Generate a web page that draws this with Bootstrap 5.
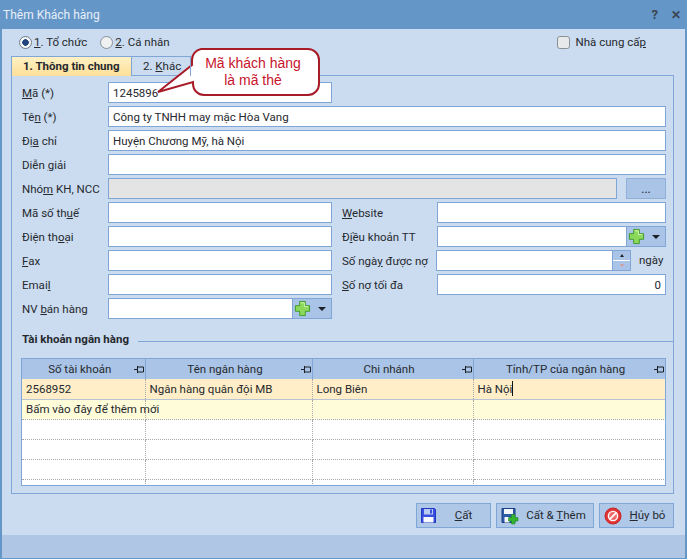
<!DOCTYPE html>
<html lang="vi">
<head>
    <meta charset="UTF-8">
    <meta name="viewport" content="width=device-width, initial-scale=1.0">
    <title>Thêm Khách hàng</title>
    <link href="https://cdn.jsdelivr.net/npm/bootstrap@5.3.0/dist/css/bootstrap.min.css" rel="stylesheet">
    <style>
        html, body { margin: 0; height: 559px; overflow: hidden; }
        body {
            font-family: Roboto, "Liberation Sans", Arial, sans-serif;
            font-size: 11.5px;
            color: #26292e;
            background: #cbdcf0;
        }
        u { text-underline-offset: 1px; }
        .app-win {
            position: relative;
            width: 687px;
            height: 559px;
            border-left: 2px solid #6496c8;
            border-right: 2px solid #6496c8;
            border-bottom: 1px solid #6496c8;
        }
        .title-bar {
            height: 29px;
            margin: 0 -2px;
            padding: 0 6px 0 3px;
            background: #6496c8;
            color: #e8eff8;
            font-size: 12px;
        }
        .title-btn { color: #3c4450; font-weight: 700; font-size: 13px; }
        .title-btn + .title-btn { margin-left: 13px; font-size: 12px; }
        .top-opts { height: 27px; padding: 0 39px 0 17px; }
        .opt-radio { width: 13px; height: 13px; margin: 0 2px 0 0; flex: none; border: 1px solid #8a8f96; background-color: #eef0f2; }
        .opt-radio:checked { background-image: radial-gradient(circle, #24467e 0 3px, #f4f6f8 3.6px); background-color: #f4f6f8; border-color: #6f7a88; }
        .opt-gap { margin-right: 13px; }
        .opt-check { width: 13px; height: 13px; margin: 0 6px 0 0; border: 1px solid #8a8f96; border-radius: 0; background-color: #e6e8ea; }
        .tab-strip { height: 19px; padding-left: 9px; }
        .tab-item { height: 20px; padding-left: 11px; color: #26292e; border: 1px solid #7fa6d6; border-bottom: 0; position: relative; z-index: 1; white-space: nowrap; }
        .tab-on { width: 121px; background: linear-gradient(#fff1c4, #fddf98); font-weight: 700; }
        .tab-off { width: 59px; border-left: 0; }
        .tab-body {
            width: 663px;
            height: 419px;
            margin-left: 9px;
            padding: 6px 7px 0 9px;
            border: 1px solid #7fa6d6;
        }
        .fld-row { height: 21px; margin-bottom: 3px; }
        .fld-label { width: 87px; flex: none; padding: 3px 0 0 1px; white-space: nowrap; }
        .fld-label-r { width: 95px; flex: none; padding-top: 3px; white-space: nowrap; }
        .fld-label-s { width: 94px; }
        .fld-half { width: 224px; flex: none; }
        .fld-side { width: 10px; flex: none; }
        .form-control.fld-input {
            height: 21px;
            min-height: 21px;
            padding: 0 4px;
            font-size: 11.5px;
            color: #26292e;
            border: 1px solid #7fa6d6;
            border-radius: 0;
            box-shadow: none;
        }
        .form-control.fld-input:disabled { background: #e4e4e4; }
        .form-control.fld-spin { width: 177px; flex: none; }
        .fld-addon { width: 39px; height: 21px; background: #a9c4e6; border: 1px solid #7fa6d6; border-left: 0; padding-left: 1px; }
        .caret-down { width: 0; height: 0; margin-left: 7px; border-left: 4px solid transparent; border-right: 4px solid transparent; border-top: 4px solid #1d2026; }
        .dots-btn { width: 40px; height: 21px; margin-left: 9px; padding: 0; font-size: 12px; line-height: 20px; color: #26292e; background: #a9c4e6; border: 1px solid #8fb0d8; border-radius: 0; }
        .spin-box { width: 18px; height: 21px; flex: none; background: #a9c4e6; border: 1px solid #7fa6d6; border-left: 0; }
        .spin-up, .spin-down { height: 50%; }
        .spin-up { border-bottom: 1px solid #fff; }
        .spin-arr-up { border-left: 2px solid transparent; border-right: 2px solid transparent; border-bottom: 3px solid #20242a; }
        .spin-arr-dn { border-left: 2px solid transparent; border-right: 2px solid transparent; border-top: 3px solid #d79a9a; }
        .grp-head { margin-top: 12px; height: 18px; margin-right: -7px; }
        .grp-head b { margin-right: 9px; padding-left: 1px; }
        .grp-line { flex: 1; height: 1px; margin-top: 3px; background: #7fa6d6; }
        .acct-wrap { width: 645px; height: 128px; margin-top: 9px; background: #fff; border: 1px solid #7fa6d6; overflow: hidden; }
        .acct-grid { width: 643px; table-layout: fixed; border-collapse: collapse; }
        .acct-grid th { height: 20px; padding: 1px 0 0 4px; font-weight: 400; background: #a9c4e6; border-right: 1px solid #7fa6d6; }
        .acct-grid td { height: 20px; padding: 1px 4px 0; border-right: 1px dotted #a9a9a9; border-bottom: 1px dotted #a9a9a9; white-space: nowrap; }
        .acct-grid tr.row-cur td { background: #ffeec7; border-bottom: 1px solid #b7c3d2; }
        .acct-grid tr.row-cur td:last-child { border-right-color: #7fa6d6; }
        .acct-grid tr.row-new td { background: #fffcd9; }
        .col-acc { width: 123px; }
        .col-bank { width: 167px; }
        .col-branch { width: 161px; }
        .col-city { width: 192px; }
        .text-cursor { display: inline-block; width: 1px; height: 15px; background: #111; vertical-align: -3px; }
        .foot-btns { height: 25px; margin-top: 9px; padding-right: 11px; gap: 5px; }
        .foot-btn { height: 25px; padding: 0 0 0 4px; font-size: 11.5px; color: #26292e; background: #afc8e8; border: 1px solid #7fa6d6; border-radius: 0; }
        .foot-btn .btn-txt { flex: 1; text-align: center; }
        .foot-btn-s { width: 75px; }
        .foot-btn-l { width: 98px; }
        .foot-band { position: absolute; left: 0; right: 0; bottom: 0; height: 23px; background: #afc7e5; }
        .note-bubble { position: absolute; left: 150px; top: 46px; pointer-events: none; }
        .note-text {
            position: absolute;
            left: 189px;
            top: 55px;
            width: 128px;
            text-align: center;
            font-family: "Liberation Sans", Arial, sans-serif;
            font-size: 14px;
            line-height: 17px;
            color: #c8142c;
        }
    </style>
</head>
<body>
    <div class="app-win d-flex flex-column">
        <div class="title-bar d-flex align-items-center justify-content-between">
            <span>Thêm Khách hàng</span>
            <span class="d-flex align-items-center">
                <span class="title-btn">?</span>
                <span class="title-btn">✕</span>
            </span>
        </div>

        <div class="top-opts d-flex align-items-center justify-content-between">
            <div class="d-flex align-items-center">
                <input class="form-check-input opt-radio" type="radio" name="kind" checked>
                <span class="opt-gap"><u>1</u>. Tổ chức</span>
                <input class="form-check-input opt-radio" type="radio" name="kind">
                <span><u>2</u>. Cá nhân</span>
            </div>
            <div class="d-flex align-items-center">
                <input class="form-check-input opt-check" type="checkbox">
                <span>Nhà cung cấ<u>p</u></span>
            </div>
        </div>

        <div class="tab-strip d-flex">
            <div class="tab-item tab-on d-flex align-items-center"><span>1. Thông tin chun<u>g</u></span></div>
            <div class="tab-item tab-off d-flex align-items-center"><span>2. <u>K</u>hác</span></div>
        </div>

        <div class="tab-body">
            <div class="fld-row d-flex align-items-center">
                <div class="fld-label"><u>M</u>ã (*)</div>
                <input class="form-control fld-input fld-half" value="1245896">
            </div>
            <div class="fld-row d-flex align-items-center">
                <div class="fld-label">Tê<u>n</u> (*)</div>
                <input class="form-control fld-input" value="Công ty TNHH may mặc Hòa Vang">
            </div>
            <div class="fld-row d-flex align-items-center">
                <div class="fld-label">Đị<u>a</u> chỉ</div>
                <input class="form-control fld-input" value="Huyện Chương Mỹ, hà Nội">
            </div>
            <div class="fld-row d-flex align-items-center">
                <div class="fld-label">Diễn <u>g</u>iải</div>
                <input class="form-control fld-input">
            </div>
            <div class="fld-row d-flex align-items-center">
                <div class="fld-label">Nhó<u>m</u> KH, NCC</div>
                <input class="form-control fld-input" disabled>
                <button class="btn dots-btn flex-shrink-0" type="button">...</button>
            </div>

            <div class="fld-row d-flex align-items-center">
                <div class="fld-label">Mã số th<u>u</u>ế</div>
                <input class="form-control fld-input fld-half">
                <div class="fld-side"></div>
                <div class="fld-label-r"><u>W</u>ebsite</div>
                <input class="form-control fld-input">
            </div>
            <div class="fld-row d-flex align-items-center">
                <div class="fld-label">Điện th<u>o</u>ại</div>
                <input class="form-control fld-input fld-half">
                <div class="fld-side"></div>
                <div class="fld-label-r">Đ<u>i</u>ều khoản TT</div>
                <input class="form-control fld-input">
                <div class="fld-addon d-flex align-items-center flex-shrink-0">
                    <svg width="17" height="17" viewBox="0 0 18 18"><path d="M6 1.5h6v4.5h4.5v6H12v4.5H6V12H1.5V6H6z" fill="#8cd85a" stroke="#3f9a2c"/><path d="M7 3h4v4h4" fill="none" stroke="#d2f5b8"/></svg>
                    <span class="caret-down"></span>
                </div>
            </div>
            <div class="fld-row d-flex align-items-center">
                <div class="fld-label"><u>F</u>ax</div>
                <input class="form-control fld-input fld-half">
                <div class="fld-side"></div>
                <div class="fld-label-r fld-label-s">Số ngà<u>y</u> được nợ</div>
                <input class="form-control fld-input fld-spin">
                <div class="spin-box d-flex flex-column">
                    <div class="spin-up d-flex align-items-center justify-content-center"><span class="spin-arr-up"></span></div>
                    <div class="spin-down d-flex align-items-center justify-content-center"><span class="spin-arr-dn"></span></div>
                </div>
                <span class="ms-2">ngày</span>
            </div>
            <div class="fld-row d-flex align-items-center">
                <div class="fld-label">Emai<u>l</u></div>
                <input class="form-control fld-input fld-half">
                <div class="fld-side"></div>
                <div class="fld-label-r"><u>S</u>ố nợ tối đa</div>
                <input class="form-control fld-input text-end" value="0">
            </div>
            <div class="fld-row d-flex align-items-center">
                <div class="fld-label">NV <u>b</u>án hàng</div>
                <div class="d-flex fld-half">
                    <input class="form-control fld-input">
                    <div class="fld-addon d-flex align-items-center flex-shrink-0">
                        <svg width="17" height="17" viewBox="0 0 18 18"><path d="M6 1.5h6v4.5h4.5v6H12v4.5H6V12H1.5V6H6z" fill="#8cd85a" stroke="#3f9a2c"/><path d="M7 3h4v4h4" fill="none" stroke="#d2f5b8"/></svg>
                        <span class="caret-down"></span>
                    </div>
                </div>
            </div>

            <div class="grp-head d-flex align-items-center">
                <b>Tài khoản ngân hàng</b>
                <div class="grp-line"></div>
            </div>

            <div class="acct-wrap">
                <table class="acct-grid">
                    <colgroup><col class="col-acc"><col class="col-bank"><col class="col-branch"><col class="col-city"></colgroup>
                    <thead>
                        <tr>
                            <th><div class="d-flex align-items-center"><span class="flex-grow-1 text-center">Số tài khoản</span><svg width="11" height="9" viewBox="0 0 11 9"><path d="M0 4.5h3M3.5 1v7M3.5 2h6v5h-6M9.5 2v5" fill="none" stroke="#1d2026"/></svg></div></th>
                            <th><div class="d-flex align-items-center"><span class="flex-grow-1 text-center">Tên ngân hàng</span><svg width="11" height="9" viewBox="0 0 11 9"><path d="M0 4.5h3M3.5 1v7M3.5 2h6v5h-6M9.5 2v5" fill="none" stroke="#1d2026"/></svg></div></th>
                            <th><div class="d-flex align-items-center"><span class="flex-grow-1 text-center">Chi nhánh</span><svg width="11" height="9" viewBox="0 0 11 9"><path d="M0 4.5h3M3.5 1v7M3.5 2h6v5h-6M9.5 2v5" fill="none" stroke="#1d2026"/></svg></div></th>
                            <th><div class="d-flex align-items-center"><span class="flex-grow-1 text-center">Tỉnh/TP của ngân hàng</span><svg width="11" height="9" viewBox="0 0 11 9"><path d="M0 4.5h3M3.5 1v7M3.5 2h6v5h-6M9.5 2v5" fill="none" stroke="#1d2026"/></svg></div></th>
                        </tr>
                    </thead>
                    <tbody>
                        <tr class="row-cur"><td>2568952</td><td>Ngân hàng quân đội MB</td><td>Long Biên</td><td>Hà Nội<span class="text-cursor"></span></td></tr>
                        <tr class="row-new"><td class="overflow-visible">Bấm vào đây để thêm mới</td><td></td><td></td><td></td></tr>
                        <tr><td></td><td></td><td></td><td></td></tr>
                        <tr><td></td><td></td><td></td><td></td></tr>
                        <tr><td></td><td></td><td></td><td></td></tr>
                        <tr><td></td><td></td><td></td><td></td></tr>
                    </tbody>
                </table>
            </div>
        </div>

        <div class="foot-btns d-flex justify-content-end">
            <button class="btn foot-btn foot-btn-s d-flex align-items-center" type="button">
                <svg width="16" height="16" viewBox="0 0 16 16"><path d="M.5.5h13l1 1v13H.5z" fill="#3b50e0" stroke="#2236c4"/><path d="M3 1h9v5.5H3z" fill="#b9cbf0"/><path d="M9 1.5h2v4H9z" fill="#3b50e0"/><path d="M2.5 9h10v5.5h-10z" fill="#f6f8fd"/></svg>
                <span class="btn-txt"><u>C</u>ất</span>
            </button>
            <button class="btn foot-btn foot-btn-l d-flex align-items-center" type="button">
                <svg width="18" height="18" viewBox="0 0 18 18"><path d="M1 1.5h13v14H1z" fill="#2c5aa8" stroke="#1c3c80"/><path d="M3 2h9v5H3z" fill="#f2f5fa"/><path d="M3.5 10h5v5.5h-5z" fill="#f4f6fb"/><path d="M10.5 7.5h3.5v3h3v3.5h-3v3h-3.5v-3h-3v-3.5h3z" fill="#35b52f" stroke="#1f8a2a" stroke-width=".6"/></svg>
                <span class="btn-txt">Cất &amp; <u>T</u>hêm</span>
            </button>
            <button class="btn foot-btn foot-btn-s d-flex align-items-center" type="button">
                <svg width="18" height="18" viewBox="0 0 18 18"><circle cx="9" cy="9" r="8" fill="#e23636" stroke="#c02626"/><circle cx="9" cy="9" r="4.6" fill="#ef6a6a" stroke="#fff" stroke-width="1.4"/><path d="M5.6 12.4l6.8-6.8" stroke="#fff" stroke-width="1.7"/></svg>
                <span class="btn-txt"><u>H</u>ủy bỏ</span>
            </button>
        </div>
        <div class="foot-band"></div>
    </div>

    <svg class="note-bubble" width="175" height="56" viewBox="0 0 175 56">
        <path d="M51 3h107a11 11 0 0 1 11 11v24a11 11 0 0 1-11 11H54a11 11 0 0 1-11-11v-2L8 46 42 19v-5a11 11 0 0 1 9-11z" fill="#fff" stroke="#a81c28" stroke-width="2"/>
    </svg>
    <div class="note-text">Mã khách hàng<br>là mã thẻ</div>

    <script src="https://cdn.jsdelivr.net/npm/bootstrap@5.3.0/dist/js/bootstrap.bundle.min.js"></script>
</body>
</html>
